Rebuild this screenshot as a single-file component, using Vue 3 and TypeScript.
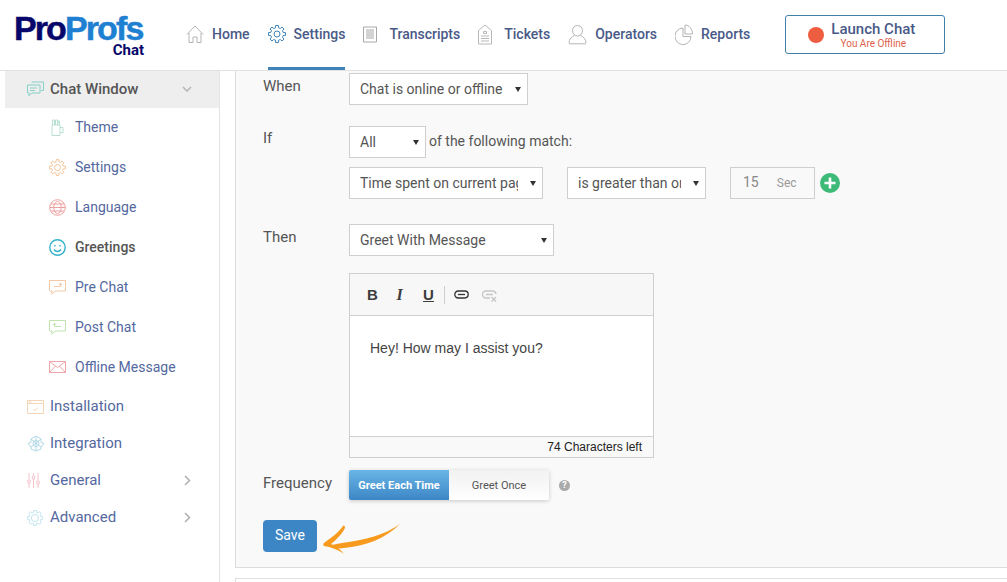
<script setup lang="ts">
interface Icon { w: number; h: number; stroke: string; paths: string[]; sw?: number }

function gear(cx: number, cy: number, r: number, rIn: number, hole: number): string {
  const pts: string[] = []
  const n = 8
  for (let i = 0; i < n; i++) {
    const a = (i / n) * Math.PI * 2 - Math.PI / 2
    const d = Math.PI / n
    const p = (rad: number, ang: number) =>
      `${(cx + rad * Math.cos(ang)).toFixed(2)} ${(cy + rad * Math.sin(ang)).toFixed(2)}`
    pts.push(`${i === 0 ? 'M' : 'L'}${p(r, a - d * 0.42)}`)
    pts.push(`L${p(r, a + d * 0.42)}`)
    pts.push(`L${p(rIn, a + d * 0.62)}`)
    pts.push(`L${p(rIn, a + d * 1.38)}`)
  }
  return (
    pts.join(' ') +
    ` Z M${cx - hole} ${cy} a${hole} ${hole} 0 1 0 ${hole * 2} 0 a${hole} ${hole} 0 1 0 ${-hole * 2} 0 Z`
  )
}

const navItems: { label: string; active?: boolean; icon: Icon }[] = [
  {
    label: 'Home',
    icon: {
      w: 18, h: 20, stroke: '#b4b4b4',
      paths: ['M.8 10.5 9 2l8.2 8.5', 'M3 9v9.5h4v-5.5h4v5.5h4V9'],
    },
  },
  {
    label: 'Settings',
    active: true,
    icon: { w: 18, h: 20, stroke: '#3f83b8', paths: [gear(9, 10, 8.6, 6.4, 3)] },
  },
  {
    label: 'Transcripts',
    icon: {
      w: 18, h: 20, stroke: '#a8a8a8',
      paths: ['M.5 3h13v15H.5z', 'M3 6h8M3 8h8M3 10h8M3 12h8M3 14h8'],
    },
  },
  {
    label: 'Tickets',
    icon: {
      w: 18, h: 22, stroke: '#b8b8b8',
      paths: ['M.5 7.5 7 2l6.5 5.5V21H.5z', 'M5.5 8.5h3v2h-3z', 'M3 13h8M3 15.5h8M3 18h8'],
    },
  },
  {
    label: 'Operators',
    icon: {
      w: 19, h: 21, stroke: '#b4b4b4',
      paths: ['M9.5 1.5c3 0 5 2.3 5 5.2s-2 5.3-5 5.3-5-2.4-5-5.3 2-5.2 5-5.2z', 'M1 19c0-4 3-6.5 5.5-7.5M18 19c0-4-3-6.5-5.5-7.5', 'M1 19.8h17'],
    },
  },
  {
    label: 'Reports',
    icon: {
      w: 18, h: 21, stroke: '#b4b4b4',
      paths: ['M8 4a8 8.3 0 1 0 8 8.5H8z', 'M10 1v9h7.5c0-5-3.2-9-7.5-9z'],
    },
  },
]

const subItems: { label: string; active?: boolean; icon: Icon }[] = [
  {
    label: 'Theme',
    icon: {
      w: 16, h: 17, stroke: '#b9dfd4',
      paths: ['M3 6h8v10.5H3z', 'M11 8.5h3v5h-3', 'M3.5 6V1h2v5M6.5 6V1h2v5M9 6V2h1.5v4'],
    },
  },
  {
    label: 'Settings',
    icon: { w: 17, h: 17, stroke: '#f3c396', paths: [gear(8.5, 8.5, 8, 5.8, 3)] },
  },
  {
    label: 'Language',
    icon: {
      w: 17, h: 17, stroke: '#ee9f9f',
      paths: [
        'M.7 8.5a7.8 7.8 0 1 0 15.6 0a7.8 7.8 0 1 0-15.6 0z',
        'M4.8 8.5c0-8 7.4-8 7.4 0s-7.4 8-7.4 0z',
        'M.7 8.5h15.6M1.8 5h13.4M1.8 12h13.4',
      ],
    },
  },
  {
    label: 'Greetings',
    active: true,
    icon: {
      w: 17, h: 17, stroke: '#33b1c9', sw: 1.4,
      paths: [
        'M.8 8.5a7.7 7.7 0 1 0 15.4 0a7.7 7.7 0 1 0-15.4 0z',
        'M5 10.5c1.8 2.6 5.2 2.6 7 0',
        'M6 6v1.4M11 6v1.4',
      ],
    },
  },
  {
    label: 'Pre Chat',
    icon: {
      w: 17, h: 15, stroke: '#f3c9a5',
      paths: ['M.5.5h16v10.5H6L3 14.2V11H.5z', 'M5 6.5h6.5V3.5M9.8 5 11.5 3.2 13 5'],
    },
  },
  {
    label: 'Post Chat',
    icon: {
      w: 17, h: 15, stroke: '#bfe3ad',
      paths: ['M.5.5h16v10.5H6L3 14.2V11H.5z', 'M12 6.5H5.5V3.5M4 5 5.5 3.2 7.2 5'],
    },
  },
  {
    label: 'Offline Message',
    icon: {
      w: 17, h: 12, stroke: '#efa4a8',
      paths: ['M.5.5h16v11H.5z', 'M.5.5l8 6 8-6M.5 11.5l6-6.5M16.5 11.5l-6-6.5'],
    },
  },
]

const chevronRight = 'M1 1l4.5 4.5L1 10'

const mainItems: { label: string; chevron: boolean; icon: Icon }[] = [
  {
    label: 'Installation',
    chevron: false,
    icon: {
      w: 17, h: 14, stroke: '#f5d5b8',
      paths: ['M.5.5h16v13H.5z', 'M.5 3.5h16', 'M1.5 2h3', 'M6 9l1.7 1.7L11 7.5'],
    },
  },
  {
    label: 'Integration',
    chevron: false,
    icon: {
      w: 18, h: 17, stroke: '#b3d9e6',
      paths: [
        'M9 1 14 4v3.5L17 8.5 14 12v2L9 16 4 14v-2L1 8.5 4 7.5V4z',
        'M4 4l10 8M14 4 4 12M9 1v15',
        'M6 8.5a3 3 0 1 0 6 0a3 3 0 1 0-6 0z',
      ],
    },
  },
  {
    label: 'General',
    chevron: true,
    icon: {
      w: 13, h: 15, stroke: '#f5c3cb',
      paths: ['M2 0v6M2 10v5M6.5 0v2M6.5 6v9M11 0v7M11 11v4', 'M.8 7h2.4v3H.8zM5.3 3h2.4v3H5.3zM9.8 8h2.4v3H9.8z'],
    },
  },
  {
    label: 'Advanced',
    chevron: true,
    icon: { w: 16, h: 16, stroke: '#bfe4ef', paths: [gear(8, 8, 7.8, 5.9, 3.6)] },
  },
]
</script>

<template>
  <div class="page">
    <header class="top">
      <div class="logo">
        <div class="logo-main"><span class="pro">Pro</span><span class="profs">Profs</span></div>
        <div class="logo-sub">Chat</div>
      </div>
      <nav class="nav">
        <a v-for="item in navItems" :key="item.label" class="nav-item" :class="{ on: item.active }">
          <svg class="icon" :width="item.icon.w" :height="item.icon.h" :viewBox="`0 0 ${item.icon.w} ${item.icon.h}`" fill="none" :stroke="item.icon.stroke">
            <path v-for="d in item.icon.paths" :key="d" :d="d" />
          </svg>
          <span>{{ item.label }}</span>
        </a>
      </nav>
      <button class="launch" type="button">
        <span class="dot"></span>
        <span class="launch-text">
          <span class="launch-title">Launch Chat</span>
          <span class="launch-sub">You Are Offline</span>
        </span>
      </button>
    </header>

    <div class="body">
      <aside class="side">
        <div class="side-head">
          <svg class="head-icon" width="17" height="16" viewBox="0 0 17 16" fill="none" stroke="#86d0c8">
            <path d="M4.5 1h12v8.5H14M.5 4h12.5v8H4.5L2 15v-3H.5z" />
            <path d="M3 7h7M3 9.5h5" />
          </svg>
          <span class="head-label">Chat Window</span>
          <svg class="head-chev" width="10" height="6" viewBox="0 0 10 6" fill="none" stroke="#b5b5b5" stroke-width="1.5">
            <path d="M1 1l4 4 4-4" />
          </svg>
        </div>
        <ul class="sub">
          <li v-for="item in subItems" :key="item.label" class="sub-item" :class="{ on: item.active }">
            <span class="sub-icon">
              <svg :width="item.icon.w" :height="item.icon.h" :viewBox="`0 0 ${item.icon.w} ${item.icon.h}`" fill="none" :stroke="item.icon.stroke" :stroke-width="item.icon.sw ?? 1">
                <path v-for="d in item.icon.paths" :key="d" :d="d" />
              </svg>
            </span>
            <span>{{ item.label }}</span>
          </li>
        </ul>
        <ul class="mains">
          <li v-for="item in mainItems" :key="item.label" class="main-item">
            <span class="main-icon">
              <svg :width="item.icon.w" :height="item.icon.h" :viewBox="`0 0 ${item.icon.w} ${item.icon.h}`" fill="none" :stroke="item.icon.stroke">
                <path v-for="d in item.icon.paths" :key="d" :d="d" />
              </svg>
            </span>
            <span class="main-label">{{ item.label }}</span>
            <svg v-if="item.chevron" class="main-chev" width="7" height="11" viewBox="0 0 7 11" fill="none" stroke="#b0b0b0" stroke-width="1.5">
              <path :d="chevronRight" />
            </svg>
          </li>
        </ul>
      </aside>

      <main class="content">
        <section class="panel">
          <div class="row row-when">
            <label class="lbl">When</label>
            <div class="ctrl">
              <div class="sel w-when"><span class="val">Chat is online or offline</span></div>
            </div>
          </div>

          <div class="row row-if">
            <label class="lbl">If</label>
            <div class="ctrl stack">
              <div class="line">
                <div class="sel w-all"><span class="val">All</span></div>
                <span class="match">of the following match:</span>
              </div>
              <div class="line cond">
                <div class="sel w-time"><span class="val">Time spent on current page</span></div>
                <div class="sel w-cmp"><span class="val">is greater than or equal to</span></div>
                <div class="num">
                  <span class="num-val">15</span>
                  <span class="num-unit">Sec</span>
                </div>
                <span class="plus">
                  <svg width="20" height="20" viewBox="0 0 20 20">
                    <circle cx="10" cy="10" r="10" fill="#3dba78" />
                    <path d="M10 4.5v11M4.5 10h11" stroke="#fff" stroke-width="2.6" />
                  </svg>
                </span>
              </div>
            </div>
          </div>

          <div class="row row-then">
            <label class="lbl">Then</label>
            <div class="ctrl">
              <div class="sel w-then"><span class="val">Greet With Message</span></div>
            </div>
          </div>

          <div class="row row-editor">
            <span class="lbl"></span>
            <div class="editor">
              <div class="toolbar">
                <span class="tb tb-b">B</span>
                <span class="tb tb-i">I</span>
                <span class="tb tb-u">U</span>
                <span class="tb-sep"></span>
                <svg class="tb-link" width="15" height="9" viewBox="0 0 15 9" fill="none" stroke="#333" stroke-width="1.3">
                  <rect x=".8" y="1" width="13.4" height="7" rx="3.4" />
                  <path d="M4 4.5h7" />
                </svg>
                <svg class="tb-unlink" width="15" height="12" viewBox="0 0 15 12" fill="none" stroke="#c6c6c6" stroke-width="1.4">
                  <path d="M8 8H4a3.5 3.5 0 0 1 0-7h7a3.5 3.5 0 0 1 3 3M4 4.5h7" />
                  <path d="M9.5 7l4.5 4.5M14 7l-4.5 4.5" />
                </svg>
              </div>
              <div class="editor-body">Hey! How may I assist you?</div>
              <div class="editor-foot">74 Characters left</div>
            </div>
          </div>

          <div class="row row-freq">
            <label class="lbl">Frequency</label>
            <div class="ctrl freq">
              <div class="toggle">
                <span class="opt opt-on">Greet Each Time</span>
                <span class="opt">Greet Once</span>
              </div>
              <span class="help">?</span>
            </div>
          </div>

          <div class="save-row">
            <button class="save" type="button">Save</button>
            <svg class="arrow" width="78" height="30" viewBox="0 0 78 30">
              <path fill="#f79a1e" d="M77 0C62 11 42 16 19 19c-6 1-10 2-14 3 5 2 10 3 16 2 21-2 41-9 56-24z" />
              <path fill="#f79a1e" d="M20 2C16 8 8 14 1 19c-1 1-1 2 0 3 7 1 15 4 20 8-3-4-8-8-13-10 5-4 11-10 14-16 0-2-1-3-2-2z" />
            </svg>
          </div>
        </section>
        <div class="next-panel"></div>
      </main>
    </div>
  </div>
</template>

<style>
html, body { margin: 0; background: #fff; overflow: hidden; }
</style>

<style scoped>
* { box-sizing: border-box; }
.page {
  width: 1007px;
  height: 582px;
  overflow: hidden;
  background: #fff;
  font-family: Roboto, "Liberation Sans", sans-serif;
  font-size: 14px;
  color: #555;
}
.top {
  display: flex;
  align-items: stretch;
  height: 71px;
  border-bottom: 1px solid #e2e2e2;
}
.logo { width: 186px; padding: 14px 0 0 14px; }
.logo-main {
  width: 132px;
  height: 29px;
  font-family: "Liberation Sans", sans-serif;
  font-weight: 700;
  font-size: 34px;
  line-height: 29px;
  letter-spacing: -1.9px;
  white-space: nowrap;
  -webkit-text-stroke: 0.5px currentColor;
}
.pro { color: #07076b; }
.profs { color: #1f80d2; }
.logo-sub {
  width: 130px;
  text-align: right;
  font-weight: 700;
  font-size: 15px;
  line-height: 15px;
  color: #07076b;
}
.nav { display: flex; gap: 18px; }
.nav-item {
  display: flex;
  align-items: center;
  gap: 8px;
  height: 70px;
  padding-bottom: 2px;
  color: #4a5a88;
  font-weight: 500;
  font-size: 14px;
  white-space: nowrap;
}
.nav-item.on { box-shadow: inset 0 -3px 0 #3f83b8; }
.icon { flex: none; }
.launch {
  align-self: flex-start;
  margin: 15px 0 0 35px;
  width: 160px;
  height: 39px;
  display: flex;
  align-items: center;
  padding: 0 0 0 22px;
  gap: 7px;
  background: #fff;
  border: 1px solid #3f7fa8;
  border-radius: 3px;
  font-family: inherit;
}
.dot { width: 16px; height: 16px; border-radius: 50%; background: #ee5d40; flex: none; }
.launch-text { display: flex; flex-direction: column; align-items: center; }
.launch-title { font-size: 15px; line-height: 18px; font-weight: 500; color: #4a5a88; }
.launch-sub { font-size: 10px; line-height: 12px; color: #de5f4c; }

.body { display: flex; height: 511px; }
.side {
  width: 220px;
  flex: none;
  border-right: 1px solid #e4e4e4;
  padding-left: 5px;
}
.side-head {
  display: flex;
  align-items: center;
  height: 37px;
  padding: 0 0 2px 22px;
  background: #eeeeee;
}
.head-label { margin-left: 6px; font-weight: 500; font-size: 15px; color: #555; flex: 1; }
.head-chev { margin-right: 27px; }
ul { list-style: none; margin: 0; padding: 0; }
.sub { margin-top: -1px; }
.sub-item {
  display: flex;
  align-items: center;
  height: 40px;
  padding-left: 42px;
  color: #5468a0;
  white-space: nowrap;
}
.sub-item.on { color: #555; font-weight: 500; }
.sub-icon { width: 28px; display: flex; justify-content: center; padding-right: 8px; }
.mains { padding-top: 1px; }
.main-item {
  display: flex;
  align-items: center;
  height: 37px;
  padding-left: 22px;
  color: #5468a0;
}
.main-icon { width: 23px; display: flex; }
.main-label { flex: 1; font-size: 15px; line-height: 20px; padding-bottom: 2px; }
.main-chev { margin-right: 28px; }

.content { flex: 1; padding-left: 15px; }
.panel {
  height: 497px;
  padding: 2px 0 0 27px;
  background: #f9f9f9;
  border-left: 1px solid #dcdcdc;
  border-bottom: 1px solid #dcdcdc;
}
.next-panel {
  margin-top: 10px;
  height: 20px;
  background: #fff;
  border-top: 1px solid #e0e0e0;
  border-left: 1px solid #dcdcdc;
}
.row { display: flex; align-items: flex-start; }
.lbl { width: 86px; flex: none; font-size: 15px; line-height: 20px; color: #555; }
.row-when .lbl { padding-top: 3px; }
.row-if { margin-top: 21px; }
.row-if .lbl { padding-top: 2px; }
.row-then { margin-top: 25px; }
.row-then .lbl { padding-top: 3px; }
.row-editor { margin-top: 17px; }
.row-freq { margin-top: 12px; }
.row-freq .lbl { padding-top: 3px; }
.stack { display: flex; flex-direction: column; gap: 9px; }
.line { display: flex; align-items: center; }
.sel {
  position: relative;
  height: 32px;
  display: flex;
  align-items: center;
  padding-left: 10px;
  background: #fff;
  border: 1px solid #cfcfcf;
  white-space: nowrap;
  overflow: hidden;
  color: #555;
}
.sel::after {
  content: "";
  position: absolute;
  right: 6px;
  top: 13px;
  border-left: 3px solid transparent;
  border-right: 3px solid transparent;
  border-top: 5px solid #333;
}
.val { display: block; overflow: hidden; }
.w-when { width: 179px; }
.w-when .val { width: 144px; }
.w-all { width: 77px; }
.w-time { width: 194px; }
.w-time .val { width: 158px; }
.w-cmp { width: 139px; margin-left: 24px; }
.w-cmp .val { width: 103px; }
.w-then { width: 205px; }
.match { margin-left: 3px; padding-bottom: 2px; color: #555; }
.num {
  width: 85px;
  height: 32px;
  margin-left: 24px;
  display: flex;
  align-items: center;
  padding-left: 12px;
  background: #f9f9f9;
  border: 1px solid #cfcfcf;
  color: #888;
}
.num-val { padding-bottom: 3px; }
.num-unit { margin-left: 18px; font-size: 12px; color: #999; }
.plus { margin-left: 5px; display: flex; }

.editor { width: 305px; border: 1px solid #cfcfcf; background: #fff; }
.toolbar {
  display: flex;
  align-items: center;
  height: 42px;
  padding-left: 17px;
  background: #f7f7f7;
  border-bottom: 1px solid #cfcfcf;
}
.tb {
  width: 11px;
  font-family: "Liberation Sans", sans-serif;
  font-weight: 700;
  font-size: 15px;
  color: #3c3c3c;
  text-align: center;
}
.tb-i { margin-left: 16px; font-family: "Liberation Serif", serif; font-style: italic; font-size: 16px; }
.tb-u { margin-left: 18px; text-decoration: underline; }
.tb-sep { width: 1px; height: 18px; margin: 0 9px 0 10px; background: #cfcfcf; }
.tb-unlink { margin: 3px 0 0 13px; }
.editor-body {
  height: 120px;
  padding: 24px 20px 0;
  font-family: "Liberation Sans", sans-serif;
  font-size: 14px;
  line-height: 16px;
  color: #444;
}
.editor-foot {
  height: 21px;
  padding-right: 11px;
  background: #f9f9f9;
  border-top: 1px solid #cfcfcf;
  text-align: right;
  font-family: "Liberation Sans", sans-serif;
  font-size: 12px;
  line-height: 21px;
  color: #222;
}
.freq { display: flex; align-items: center; }
.toggle {
  display: flex;
  width: 200px;
  height: 30px;
  border-radius: 2px;
  box-shadow: 0 1px 4px rgba(0, 0, 0, 0.2);
  font-size: 11px;
}
.opt {
  flex: 1;
  display: flex;
  align-items: center;
  justify-content: center;
  background: linear-gradient(#f1f1f1, #fff);
  color: #555;
  border-radius: 0 2px 2px 0;
}
.opt-on {
  background: linear-gradient(#69b6e6, #3d86c6);
  color: #fff;
  font-weight: 700;
  border-radius: 2px 0 0 2px;
}
.help {
  margin-left: 10px;
  width: 11px;
  height: 11px;
  border-radius: 50%;
  background: #aaa;
  color: #fff;
  font-size: 9px;
  font-weight: 700;
  line-height: 11px;
  text-align: center;
}
.save-row { display: flex; align-items: flex-start; margin-top: 20px; }
.save {
  width: 54px;
  height: 32px;
  padding: 0 0 2px;
  background: #3d86c6;
  border: 0;
  border-radius: 4px;
  color: #fff;
  font-family: inherit;
  font-size: 14px;
}
.arrow { margin: 4px 0 0 6px; }
</style>
